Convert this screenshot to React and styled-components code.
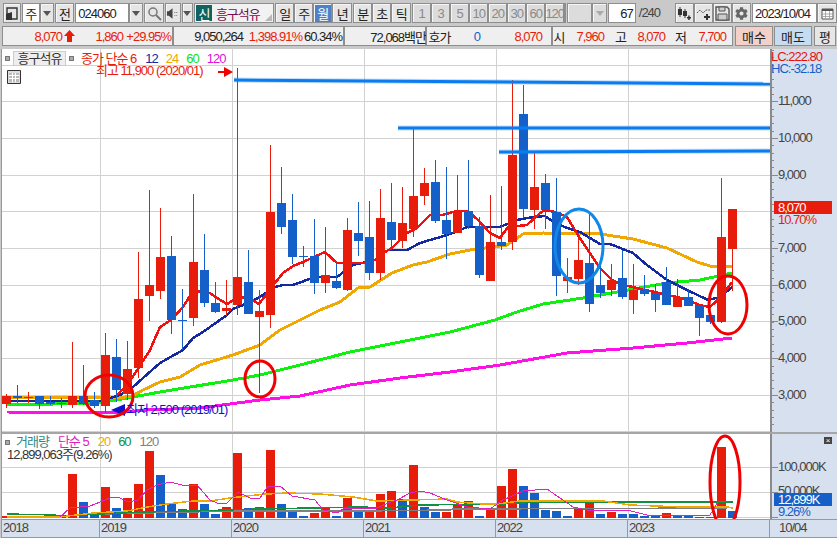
import React from "react";
import styled, { createGlobalStyle } from "styled-components";
import { FaCog } from "react-icons/fa";

const RED = "#e81c0a";
const BLUE = "#1560c8";
const AXIS = "#d6e0ee";

const GlobalStyle = createGlobalStyle`
  html, body {
    margin: 0;
    padding: 0;
    background: #c9c9c9;
  }
  body {
    font-family: "Liberation Sans", "Noto Sans CJK KR", sans-serif;
    font-size: 13px;
    letter-spacing: -1px;
    overflow: hidden;
  }
`;

const Page = styled.div`
  width: 837px;
  height: 538px;
  display: flex;
  flex-direction: column;
  overflow: hidden;
`;

const Toolbar = styled.div`
  display: flex;
  gap: 1px;
  height: 20px;
  margin-top: 3px;
  padding-left: 3px;
  color: #222;
`;

const Btn = styled.div`
  box-sizing: border-box;
  width: ${(p) => p.$w || 19}px;
  height: 20px;
  display: flex;
  align-items: center;
  justify-content: center;
  border: 1px solid #8e8e8e;
  background: ${(p) => (p.$active ? "#4f81c4" : p.$off ? "#dcdcdc" : "#e6e6e6")};
  box-shadow: inset 1px 1px 0 #f6f6f6;
  color: ${(p) => (p.$active ? "#fff" : p.$off ? "#8a8a8a" : "#222")};
  margin-right: ${(p) => p.$mr || 0}px;
`;

const Field = styled.div`
  box-sizing: border-box;
  width: ${(p) => p.$w}px;
  height: 20px;
  display: flex;
  align-items: center;
  justify-content: ${(p) => p.$align || "flex-start"};
  padding: 0 2px;
  background: #fff;
  border: 1px solid #8e8e8e;
`;

const Group = styled.div`
  display: flex;
`;

const Caret = styled.span`
  width: 0;
  height: 0;
  border-left: 4px solid transparent;
  border-right: 4px solid transparent;
  border-top: 5px solid ${(p) => p.$c || "#555"};
`;

const NameBox = styled(Field)`
  position: relative;
  gap: 4px;
  padding-left: 1px;
  color: #7a0a55;
  background: #f2f2f2;
  &::after {
    content: "";
    position: absolute;
    right: 1px;
    bottom: 1px;
    border-left: 7px solid transparent;
    border-bottom: 7px solid #b8b8b8;
  }
`;

const NewTag = styled.span`
  width: 16px;
  height: 16px;
  display: flex;
  align-items: center;
  justify-content: center;
  background: #0e6460;
  color: #fff;
`;

const PageCount = styled.span`
  width: 36px;
  padding-left: 2px;
  color: #444;
  line-height: 20px;
`;

const InfoRow = styled.div`
  display: flex;
  height: 20px;
  margin-top: 3px;
  padding-left: 2px;
`;

const Section = styled.div`
  box-sizing: border-box;
  width: ${(p) => p.$w}px;
  height: 20px;
  display: flex;
  align-items: center;
  background: #efefef;
  border: 1px solid #8e8e8e;
  margin-left: ${(p) => p.$ml || 0}px;
`;

const Value = styled.span`
  width: ${(p) => p.$w}px;
  flex: none;
  text-align: ${(p) => p.$align || "right"};
  color: ${(p) => p.$c || "#222"};
  white-space: nowrap;
`;

const TradeBtn = styled.div`
  box-sizing: border-box;
  width: ${(p) => p.$w}px;
  height: 20px;
  margin-left: ${(p) => p.$ml}px;
  display: flex;
  align-items: center;
  justify-content: center;
  background: ${(p) => p.$bg};
  border: 1px solid #8e8e8e;
  letter-spacing: 0;
  color: #222;
`;

const Frame = styled.div`
  margin: 3px 0 0 1px;
  border-left: 1px solid #999;
  display: flex;
  flex-direction: column;
  width: 835px;
`;

const Row = styled.div`
  display: grid;
  grid-template-columns: 768px 67px;
  height: ${(p) => p.$h}px;
`;

const Plot = styled.div`
  position: relative;
  background: #fff;
  overflow: hidden;
  svg {
    display: block;
  }
`;

const Axis = styled.div`
  position: relative;
  background: ${AXIS};
  overflow: hidden;
  color: #444;
  svg {
    position: absolute;
    left: 0;
    top: 0;
  }
`;

const AxisLabel = styled.span`
  position: absolute;
  left: ${(p) => p.$x ?? 8}px;
  top: ${(p) => p.$y}px;
  color: ${(p) => p.$c || "#444"};
  line-height: 14px;
  white-space: nowrap;
`;

const Flag = styled.span`
  position: absolute;
  left: 4px;
  top: ${(p) => p.$y}px;
  width: 58px;
  height: 13px;
  padding-left: 4px;
  box-sizing: border-box;
  background: ${(p) => p.$bg};
  color: #fff;
  line-height: 13px;
`;

const CloseBox = styled.span`
  position: absolute;
  right: 5px;
  top: 3px;
  width: 8px;
  height: 7px;
  background: #444;
  color: #fff;
  font-size: 8px;
  line-height: 7px;
  text-align: center;
  letter-spacing: 0;
`;

const Divider = styled.div`
  height: 2px;
  background: #a6a6a6;
`;

const Legend = styled.div`
  position: absolute;
  left: ${(p) => p.$x}px;
  top: ${(p) => p.$y}px;
  display: flex;
  align-items: center;
  line-height: 14px;
  white-space: nowrap;
`;

const Dot = styled.span`
  width: 5px;
  height: 5px;
  background: #aaa;
  border: 1px solid #777;
  box-sizing: border-box;
`;

const NameChip = styled.span`
  box-sizing: border-box;
  width: 53px;
  height: 15px;
  margin: 0 3px;
  background: #eee;
  border: 1px solid #ccc;
  color: #333;
  line-height: 13px;
  text-align: center;
`;

const Tag = styled.span`
  color: ${(p) => p.$c};
  margin-left: ${(p) => p.$ml || 0}px;
`;

const TimeRow = styled.div`
  display: flex;
  height: 17px;
  background: ${AXIS};
  border-top: 1px solid #999;
  border-bottom: 1px solid #999;
  color: #444;
`;

const TimeCell = styled.div`
  width: ${(p) => p.$w}px;
  box-sizing: border-box;
  padding-left: ${(p) => p.$pl ?? 1}px;
  line-height: 16px;
  border-right: 1px solid #999;
  &:last-child {
    border-right: 0;
  }
`;

// [colour, body top, body bottom, wick top, wick bottom]; x = 6 + 11 * index
const candles = [
  ["r", 396, 404, 394, 408], ["b", 396, 398, 385, 403], ["r", 397, 398, 392, 403], ["b", 396, 404, 396, 409],
  ["b", 402, 404, 396, 405], ["r", 403, 404, 398, 408], ["r", 396, 405, 342, 408], ["b", 396, 404, 365, 405],
  ["b", 400, 406, 392, 408], ["r", 355, 406, 333, 413], ["b", 357, 390, 339, 402], ["r", 369, 394, 341, 400],
  ["r", 299, 368, 252, 378], ["r", 285, 296, 190, 321], ["r", 257, 291, 208, 299], ["b", 256, 320, 236, 334],
  ["b", 320, 321, 289, 350], ["r", 262, 318, 194, 326], ["b", 270, 303, 234, 307], ["b", 303, 312, 282, 313],
  ["r", 308, 311, 280, 316], ["r", 277, 305, 68, 315], ["b", 282, 314, 250, 314], ["r", 311, 317, 290, 393],
  ["r", 212, 315, 145, 328], ["b", 203, 227, 167, 234], ["b", 220, 257, 194, 264], ["b", 256, 257, 246, 267],
  ["b", 256, 283, 219, 294], ["r", 275, 283, 227, 293], ["b", 281, 288, 263, 289], ["r", 230, 290, 218, 291],
  ["b", 233, 241, 202, 256], ["b", 237, 273, 201, 280], ["r", 218, 273, 189, 280], ["b", 222, 240, 183, 250],
  ["r", 223, 241, 187, 248], ["r", 196, 229, 128, 237], ["r", 183, 196, 168, 205], ["b", 182, 221, 160, 223],
  ["b", 220, 234, 167, 259], ["r", 211, 233, 175, 233], ["b", 211, 226, 160, 229], ["b", 226, 275, 217, 278],
  ["r", 242, 281, 195, 281], ["b", 242, 246, 186, 250], ["r", 155, 242, 80, 250], ["b", 114, 209, 85, 218],
  ["r", 187, 210, 153, 229], ["b", 183, 210, 174, 229], ["b", 212, 276, 178, 296], ["r", 277, 281, 258, 293],
  ["r", 260, 279, 235, 285], ["b", 263, 304, 214, 312], ["b", 285, 293, 258, 298], ["r", 280, 290, 264, 296],
  ["b", 278, 297, 250, 299], ["r", 290, 300, 264, 314], ["b", 289, 294, 275, 296], ["b", 293, 300, 284, 312],
  ["b", 282, 305, 267, 305], ["r", 297, 307, 279, 307], ["b", 297, 306, 290, 306], ["b", 305, 318, 305, 336],
  ["b", 315, 322, 315, 324], ["r", 237, 322, 178, 323], ["r", 209, 249, 209, 291],
];

// [colour, bar top]; the bars end at y = 518
const volumes = [
  ["r", 516], ["r", 516], ["b", 517], ["b", 517], ["b", 518], ["r", 516], ["r", 474], ["b", 502], ["b", 515],
  ["r", 487], ["b", 508], ["r", 498], ["r", 484], ["r", 451], ["b", 475], ["b", 504], ["b", 509], ["r", 484],
  ["b", 504], ["b", 514], ["r", 507], ["r", 453], ["b", 508], ["r", 507], ["r", 450], ["b", 504], ["b", 512],
  ["b", 516], ["r", 513], ["r", 507], ["b", 516], ["r", 498], ["b", 512], ["r", 512], ["r", 494], ["r", 491],
  ["b", 499], ["r", 465], ["b", 507], ["b", 512], ["r", 512], ["r", 505], ["r", 501], ["b", 516], ["r", 508],
  ["r", 486], ["r", 469], ["b", 486], ["b", 493], ["b", 510], ["b", 511], ["b", 516], ["r", 508], ["r", 501],
  ["b", 514], ["r", 512], ["b", 514], ["b", 514], ["b", 516], ["b", 516], ["r", 513], ["b", 515], ["b", 515],
  ["b", 517], ["r", 517], ["r", 447], ["b", 511],
];

const ma6 = "116,396 127,385 132,378 150,350 160,327 171,320 183,307 193,291 210,293 217,298 227,304 237,298 248,297 259,304 275,283 283,273 293,266 303,262 325,252 337,263 363,263 375,260 385,252 392,248 407,233 417,228 430,215 442,215 457,211 468,211 478,220 490,233 500,238 508,227 527,225 540,213 545,210 555,212 567,217 578,235 589,252 600,268 612,280 622,285 633,287 644,290 655,292 667,295 677,297 688,300 699,305 710,307 721,297 732,282";
const ma12 = "8,401 100,401 120,395 132,388 143,378 160,363 183,350 193,338 203,332 227,315 233,309 248,303 260,297 275,287 283,285 293,285 315,277 337,277 353,265 375,260 388,250 407,250 420,243 437,238 453,233 467,227 500,227 517,220 533,217 545,216 555,223 567,228 580,232 600,244 610,244 633,253 647,265 667,280 687,290 708,300 720,297 732,287";
const ma24 = "8,397 125,397 132,396 143,390 160,382 180,377 200,365 233,355 260,345 280,330 300,320 320,310 340,302 358,288 370,287 392,273 413,265 427,262 450,254 470,250 493,247 507,245 523,234 543,233 600,234 633,239 667,248 697,262 710,266 732,266";
const ma60 = "7,405 100,403 110,401 133,397 160,392 233,380 260,375 300,365 350,352 400,342 450,332 495,320 517,312 543,304 583,298 617,292 667,283 700,280 732,273";
const ma120 = "7,412 115,413 147,410 200,408 260,400 300,396 350,385 400,378 450,372 500,365 528,360 567,353 633,348 687,343 732,338";

const vol5 = "60,517 70,508 80,507 90,506 100,502 110,498 118,497 128,502 138,500 147,490 157,485 170,482 182,485 197,485 210,500 217,503 227,503 238,492 250,498 260,498 268,486 280,486 292,496 315,500 323,510 337,513 343,509 377,508 388,503 397,500 410,493 420,491 430,493 447,500 467,507 490,509 503,500 523,491 547,489 560,498 573,507 587,510 627,510 647,515 710,515 718,502 730,501";
const vol20 = "7,517 60,517 93,513 127,511 147,507 167,504 193,501 210,501 230,498 247,496 267,494 287,493 320,494 353,497 377,501 447,499 457,502 483,504 497,504 520,501 540,501 603,501 630,505 683,507 727,507 733,508";
const vol60 = "7,514 55,515 60,516 100,514 143,512 193,511 260,509 360,507 390,508 420,505 500,504 540,502 733,502";
const vol120 = "103,514 143,513 233,511 360,511 450,510 453,509 727,508";

const verticals = [100, 232, 364, 496, 628];
const priceLines = [65, 101, 138, 175, 211, 248, 285, 321, 358, 395, 431];
const volLines = [467, 492, 517];
const priceLabels = [
  ["11,000", 101], ["10,000", 138], ["9,000", 175], ["7,000", 248],
  ["6,000", 285], ["5,000", 321], ["4,000", 358], ["3,000", 395],
];

const colour = (c) => (c === "r" ? RED : BLUE);

function Line({ points, color, width = 2 }) {
  return <polyline points={points} fill="none" stroke={color} strokeWidth={width} shapeRendering="crispEdges" />;
}

function Grid({ lines, top, bottom }) {
  return (
    <g fill="#d2d2d2" shapeRendering="crispEdges">
      {verticals.map((x) => (
        <rect key={x} x={x} y={top} width="1" height={bottom - top} />
      ))}
      {lines.map((y) => (
        <rect key={y} x="2" y={y} width="768" height="1" />
      ))}
    </g>
  );
}

function TrendLine({ x1, y1, x2, y2 }) {
  return (
    <g>
      <line x1={x1} y1={y1} x2={x2} y2={y2} stroke="#0a7cf0" strokeOpacity="0.25" strokeWidth="5" />
      <line x1={x1} y1={y1} x2={x2} y2={y2} stroke="#0a7cf0" strokeWidth="3" />
    </g>
  );
}

function MainChart() {
  return (
    <svg width="768" height="383" viewBox="2 49 768 383">
      <Grid lines={priceLines} top={49} bottom={432} />
      <Line points={ma120} color="#ff10e8" width={3} />
      <Line points={ma60} color="#10f010" width={3} />
      <Line points={ma24} color="#f0a800" width={3} />
      <Line points={ma12} color="#1428a0" width={2.5} />
      <Line points={ma6} color="#f01010" width={2.5} />
      <g shapeRendering="crispEdges">
        {candles.map(([c, top, bot, wt, wb], i) => {
          const x = 6 + 11 * i;
          return (
            <g key={i} fill={colour(c)}>
              <rect x={x} y={wt} width="1" height={wb - wt} />
              <rect x={x - 4} y={top} width="9" height={Math.max(bot - top, 1)} />
            </g>
          );
        })}
      </g>
      <TrendLine x1={234} y1={80} x2={770} y2={84} />
      <TrendLine x1={398} y1={128} x2={770} y2={128} />
      <TrendLine x1={499} y1={152} x2={770} y2={151} />
      <polygon points="233,72 224,67 224,71 218,71 218,73 224,73 224,77" fill="#f00000" />
      <polygon points="111,410 125,404 125,416" fill="#1010d0" />
      <g fill="none" strokeWidth="3">
        <ellipse cx="109" cy="396" rx="24" ry="21" stroke="#f00000" />
        <ellipse cx="260" cy="379" rx="15" ry="18" stroke="#f00000" />
        <ellipse cx="728" cy="305" rx="19" ry="29" stroke="#f00000" />
        <ellipse cx="579" cy="246" rx="24" ry="37" stroke="#1088e8" />
      </g>
    </svg>
  );
}

function VolumeChart() {
  return (
    <svg width="768" height="85" viewBox="2 434 768 85">
      <Grid lines={volLines} top={434} bottom={519} />
      <g shapeRendering="crispEdges">
        {volumes.map(([c, top], i) => (
          <rect key={i} x={2 + 11 * i} y={top} width="9" height={518 - top} fill={colour(c)} />
        ))}
      </g>
      <Line points={vol120} color="#808080" width={1.5} />
      <Line points={vol60} color="#109040" width={1.5} />
      <Line points={vol20} color="#f0a800" width={1.5} />
      <Line points={vol5} color="#e020c0" width={1} />
      <ellipse cx="725" cy="482" rx="15" ry="46" fill="none" stroke="#f00000" strokeWidth="3" />
    </svg>
  );
}

function Ticks({ height, majors, minorStep, firstMinor }) {
  const minors = [];
  for (let y = firstMinor; y < height; y += minorStep) minors.push(Math.round(y));
  return (
    <svg width="12" height={height}>
      <g fill="#8a8a8a" shapeRendering="crispEdges">
        <rect x="0" y="0" width="2" height={height} />
        {minors.map((y) => (
          <rect key={y} x="2" y={y} width="2" height="1" />
        ))}
        {majors.map((y) => (
          <rect key={y} x="2" y={y} width="6" height="1" />
        ))}
      </g>
    </svg>
  );
}

function ToolIcon({ children }) {
  return (
    <svg width="15" height="15" viewBox="0 0 15 15">
      {children}
    </svg>
  );
}

function Toolstrip() {
  return (
    <Toolbar>
      <Btn $w={18}>
        <ToolIcon>
          <path d="M3 2h10v11H7V8H3z" fill="none" stroke="#333" strokeWidth="1.4" />
          <path d="M2 8l6-2v8H2z" fill="#333" />
        </ToolIcon>
      </Btn>
      <Group>
        <Field $w={18} $align="center">주</Field>
        <Btn $w={14}><Caret /></Btn>
      </Group>
      <Btn $w={20}>전</Btn>
      <Group>
        <Field $w={54}>024060</Field>
        <Btn $w={14}><Caret /></Btn>
      </Group>
      <Btn $w={20}>
        <ToolIcon>
          <circle cx="6" cy="6" r="4" fill="none" stroke="#777" strokeWidth="1.5" />
          <path d="M9 9l5 5" stroke="#777" strokeWidth="2" />
        </ToolIcon>
      </Btn>
      <Group>
        <Btn $w={16} $mr={1}>
          <ToolIcon>
            <path d="M1 5h2l4-3v11l-4-3H1z" fill="#444" />
            <path d="M9 6h1v1H9zM11 6h1v1h-1zM9 9h1v1H9zM11 9h1v1h-1z" fill="#666" />
          </ToolIcon>
        </Btn>
        <Btn $w={11}><Caret /></Btn>
      </Group>
      <NameBox $w={82}>
        <NewTag>신</NewTag>
        흥구석유
      </NameBox>
      <Group>
        <Btn>일</Btn>
        <Btn>주</Btn>
        <Btn $active>월</Btn>
        <Btn $w={20}>년</Btn>
      </Group>
      <Group>
        <Btn>분</Btn>
        <Btn>초</Btn>
        <Btn $w={20}>틱</Btn>
      </Group>
      <Group>
        {["1", "3", "5", "10", "20", "30", "60", "120"].map((t) => (
          <Btn key={t} $off>{t}</Btn>
        ))}
        <Btn $off $w={1} />
      </Group>
      <Group>
        <Btn $off $w={25} />
        <Btn $off $w={15}><Caret $c="#aaa" /></Btn>
      </Group>
      <Field $w={28} $align="flex-end">67</Field>
      <PageCount>/240</PageCount>
      <Group>
        <Btn $w={19}>
          <ToolIcon>
            <path d="M3 1v10M8 3v9" stroke="#333" />
            <path d="M1 3h4v6H1zM6 5h4v5H6z" fill="#333" />
            <path d="M10 11h4v1.5h-4zM11.2 9.5h1.5v4.5h-1.5z" fill="#333" />
          </ToolIcon>
        </Btn>
        <Btn $w={19}>
          <ToolIcon>
            <path d="M1 7l3-3 3 3 3-3 4 0" fill="none" stroke="#555" strokeDasharray="2 1" />
            <path d="M8 10h6v2H8zM10 8h2v6h-2z" fill="#333" />
          </ToolIcon>
        </Btn>
        <Btn $w={19}>
          <ToolIcon>
            <path d="M1 1h11l2 2v11H1z" fill="none" stroke="#555" strokeWidth="1.4" />
            <path d="M4 1h6v4H4zM3 8h9v6H3z" fill="#ccc" stroke="#555" />
          </ToolIcon>
        </Btn>
        <Btn $w={19}><FaCog size={13} color="#666" /></Btn>
      </Group>
      <Group>
        <Field $w={65}>2023/10/04</Field>
        <Btn $w={20}>
          <ToolIcon>
            <path d="M2 3h11v10H2z" fill="#fff" stroke="#555" />
            <path d="M2 3h11v2H2z" fill="#555" />
            <path d="M5.5 5v8M9.5 5v8M2 8h11M2 10.500h11" stroke="#999" strokeWidth="0.8" />
          </ToolIcon>
        </Btn>
      </Group>
    </Toolbar>
  );
}

function Quotes() {
  return (
    <InfoRow>
      <Section $w={171}>
        <Value $w={59} $c={RED}>8,070</Value>
        <svg width="15" height="14" viewBox="0 0 15 14">
          <path d="M7.500 1L13 7H10V13H5V7H2z" fill={RED} />
        </svg>
        <Value $w={46} $c={RED}>1,860</Value>
        <Value $w={48} $c={RED}>+29.95%</Value>
      </Section>
      <Section $w={171}>
        <Value $w={69}>9,050,264</Value>
        <Value $w={59} $c={RED}>1,398.91%</Value>
        <Value $w={40}>60.34%</Value>
      </Section>
      <Section $w={82}>
        <Value $w={81}>72,068백만</Value>
      </Section>
      <Section $w={126}>
        <Value $w={25} $align="center">호가</Value>
        <Value $w={28} $c={BLUE}>0</Value>
        <Value $w={62} $c={RED}>8,070</Value>
      </Section>
      <Section $w={181}>
        <Value $w={12} $align="center">시</Value>
        <Value $w={39} $c={RED}>7,960</Value>
        <Value $w={22}>고</Value>
        <Value $w={39} $c={RED}>8,070</Value>
        <Value $w={21}>저</Value>
        <Value $w={40} $c={RED}>7,700</Value>
      </Section>
      <TradeBtn $w={38} $ml={2} $bg="#f3d1c9">매수</TradeBtn>
      <TradeBtn $w={38} $ml={1} $bg="#c6dcf1">매도</TradeBtn>
      <TradeBtn $w={22} $ml={2} $bg="#e6e6e6">평</TradeBtn>
    </InfoRow>
  );
}

export default function App() {
  return (
    <Page>
      <GlobalStyle />
      <Toolstrip />
      <Quotes />
      <Frame>
        <Row $h={383}>
          <Plot>
            <MainChart />
            <Legend $x={3} $y={2}>
              <Dot />
              <NameChip>흥구석유</NameChip>
              <Dot />
              <Tag $c={RED} $ml={7}>종가 단순 6</Tag>
              <Tag $c="#1428a0" $ml={9}>12</Tag>
              <Tag $c="#f0a800" $ml={8}>24</Tag>
              <Tag $c="#10e010" $ml={8}>60</Tag>
              <Tag $c="#e010e0" $ml={8}>120</Tag>
            </Legend>
            <Legend $x={94} $y={15}>
              <Tag $c={RED}>최고 11,900 (2020/01)</Tag>
            </Legend>
            <Legend $x={5} $y={21}>
              <svg width="14" height="14" viewBox="0 0 14 14">
                <path d="M0.500 0.500h13v13h-13z" fill="#ddd" stroke="#333" />
                <path d="M2 3h10v9H2z" fill="#bbb" />
                <path d="M2 5.500h10M2 8.500h10M5.500 3v9M8.500 3v9" stroke="#fff" />
              </svg>
            </Legend>
            <Legend $x={124} $y={354}>
              <Tag $c="#1010d0">최저 2,500 (2019/01)</Tag>
            </Legend>
          </Plot>
          <Axis>
            <Ticks height={383} majors={[52, 89, 126, 162, 199, 236, 272, 309, 346]} minorStep={7.34} firstMinor={1} />
            <AxisLabel $x={1} $y={1} $c="#e81010">LC:222.80</AxisLabel>
            <AxisLabel $x={1} $y={13} $c={BLUE}>HC:-32.18</AxisLabel>
            {priceLabels.map(([t, y]) => (
              <AxisLabel key={t} $y={y - 56}>{t}</AxisLabel>
            ))}
            <Flag $y={152} $bg={RED}>8,070</Flag>
            <AxisLabel $y={164} $c={RED}>10.70%</AxisLabel>
          </Axis>
        </Row>
        <Divider />
        <Row $h={85}>
          <Plot>
            <VolumeChart />
            <Legend $x={3} $y={1}>
              <Dot />
              <Tag $c="#2a8a8a" $ml={6}>거래량</Tag>
              <Tag $c="#e020c0" $ml={9}>단순 5</Tag>
              <Tag $c="#f0a800" $ml={9}>20</Tag>
              <Tag $c="#109040" $ml={8}>60</Tag>
              <Tag $c="#808080" $ml={9}>120</Tag>
            </Legend>
            <Legend $x={5} $y={14}>
              <Tag $c="#333">12,899,063주(9.26%)</Tag>
            </Legend>
          </Plot>
          <Axis>
            <Ticks height={85} majors={[33, 58, 83]} minorStep={200} firstMinor={200} />
            <CloseBox>×</CloseBox>
            <AxisLabel $y={26}>100,000K</AxisLabel>
            <AxisLabel $y={50}>50,000K</AxisLabel>
            <Flag $y={59} $bg={BLUE}>12,899K</Flag>
            <AxisLabel $y={71} $c={BLUE}>9.26%</AxisLabel>
          </Axis>
        </Row>
        <TimeRow>
          <TimeCell $w={98}>2018</TimeCell>
          <TimeCell $w={132}>2019</TimeCell>
          <TimeCell $w={132}>2020</TimeCell>
          <TimeCell $w={132}>2021</TimeCell>
          <TimeCell $w={132}>2022</TimeCell>
          <TimeCell $w={142}>2023</TimeCell>
          <TimeCell $w={67} $pl={9}>10/04</TimeCell>
        </TimeRow>
      </Frame>
    </Page>
  );
}
